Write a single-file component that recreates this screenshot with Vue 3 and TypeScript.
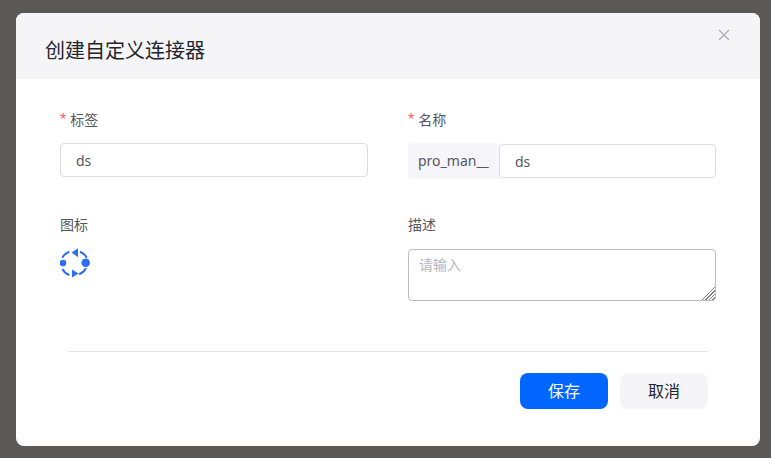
<script setup lang="ts">
const title = '创建自定义连接器'
</script>

<template>
  <div class="page">
    <div class="modal">
      <header class="head">
        <h1>{{ title }}</h1>
        <svg class="close" width="12" height="12" viewBox="0 0 12 12"><path d="M1 1l10 10M11 1L1 11" stroke="#a9abb5" stroke-width="1.1" fill="none" /></svg>
      </header>
      <div class="body">
        <div class="grid">
          <div class="field f1">
            <label><i>*</i>标签</label>
            <input class="input" value="ds" />
          </div>
          <div class="field f1">
            <label><i>*</i>名称</label>
            <div class="group">
              <span class="prefix">pro_man__</span>
              <input class="input inner" value="ds" />
            </div>
          </div>
          <div class="field f2">
            <label>图标</label>
            <svg class="icon" width="30" height="30" viewBox="0 0 30 30" fill="none">
              <g stroke="#2e6ff0" stroke-width="2">
                <path d="M2.3 9.7A13 13 0 0 1 9.3 3.7" />
                <path d="M20 3.7A13 13 0 0 1 26.7 9.7" />
                <path d="M2.3 21A13 13 0 0 0 9.3 27" />
                <path d="M19 26.3A13 13 0 0 0 26 20.3" />
              </g>
              <g fill="#2e6ff0">
                <circle cx="3" cy="15" r="3.300" />
                <circle cx="25.700" cy="14.700" r="4.300" />
                <path d="M11.500 4.500L18 .2V9.200z" />
                <path d="M12 21.500v8l6.500-4z" />
              </g>
            </svg>
          </div>
          <div class="field f2">
            <label>描述</label>
            <textarea class="area" placeholder="请输入"></textarea>
          </div>
        </div>
        <div class="foot">
          <button class="btn primary">保存</button>
          <button class="btn">取消</button>
        </div>
      </div>
    </div>
  </div>
</template>

<style>
html, body { margin: 0; background: #5c5856; }
</style>

<style scoped>
.page {
  width: 771px;
  height: 458px;
  box-sizing: border-box;
  padding: 13px 11px 12px 16px;
  background: #5c5856;
  font-family: "Noto Sans CJK SC", "Noto Sans", sans-serif;
  overflow: hidden;
}
.modal {
  height: 433px;
  background: #fff;
  border-radius: 8px;
  overflow: hidden;
}
.head {
  height: 66px;
  box-sizing: border-box;
  background: #f5f5f8;
  padding: 0 30px 0 29px;
  display: flex;
  align-items: center;
  justify-content: space-between;
}
.head h1 {
  margin: 0;
  font-size: 20px;
  font-weight: 400;
  color: #23252b;
  line-height: 74px;
  height: 66px;
}
.close { margin-top: -22px; }
.body { padding: 0 44px; }
.grid {
  display: grid;
  grid-template-columns: 308px 308px;
  column-gap: 40px;
  padding-top: 30px;
}
.field { display: flex; flex-direction: column; align-items: flex-start; }
.f1 { height: 105px; }
.f2 { height: 137px; }
label {
  font-size: 14px;
  line-height: 20px;
  color: #55575e;
  height: 34px;
}
label i { font-style: normal; font-size: 16px; color: #ff5a6e; margin-right: 4px; font-family: "Liberation Sans", sans-serif; }
.input {
  width: 308px;
  height: 34px;
  box-sizing: border-box;
  border: 1px solid #dadce6;
  border-radius: 4px;
  padding: 0 15px;
  font: 14px "Noto Sans", sans-serif;
  color: #55575e;
  outline: none;
  background: #fff;
}
.group { display: flex; width: 308px; height: 36px; align-items: center; }
.prefix {
  width: 93px;
  height: 36px;
  box-sizing: border-box;
  padding-left: 10px;
  margin-right: -2px;
  background: #f5f5fa;
  border-radius: 4px;
  font-size: 14px;
  line-height: 35px;
  color: #55575e;
  font-family: "Noto Sans", sans-serif;
}
.inner { flex: 1; width: 217px; position: relative; }
.icon { display: block; }
.area {
  display: block;
  width: 308px;
  height: 52px;
  box-sizing: border-box;
  margin-top: 1px;
  border: 1px solid #bdbdbd;
  border-radius: 4px;
  padding: 4px 10px;
  font: 14px/20px "Noto Sans CJK SC", sans-serif;
  color: #55575e;
  outline: none;
}
.area::placeholder { color: #b4b6bd; }
.area::-webkit-resizer {
  background:
    linear-gradient(135deg, #fff 50%, transparent 50%),
    repeating-linear-gradient(135deg, #fff 0 1.4px, #808080 1.4px 2.5px);
}
.foot {
  margin: 0 8px;
  border-top: 1px solid #e3e3e6;
  padding-top: 21px;
  display: flex;
  justify-content: flex-end;
  gap: 12px;
}
.btn {
  width: 88px;
  height: 36px;
  border: 0;
  border-radius: 8px;
  background: #f5f5f8;
  color: #23252b;
  font: 16px "Noto Sans CJK SC", sans-serif;
  padding: 0 0 2px;
}
.primary { background: #0066ff; color: #fff; }
</style>
